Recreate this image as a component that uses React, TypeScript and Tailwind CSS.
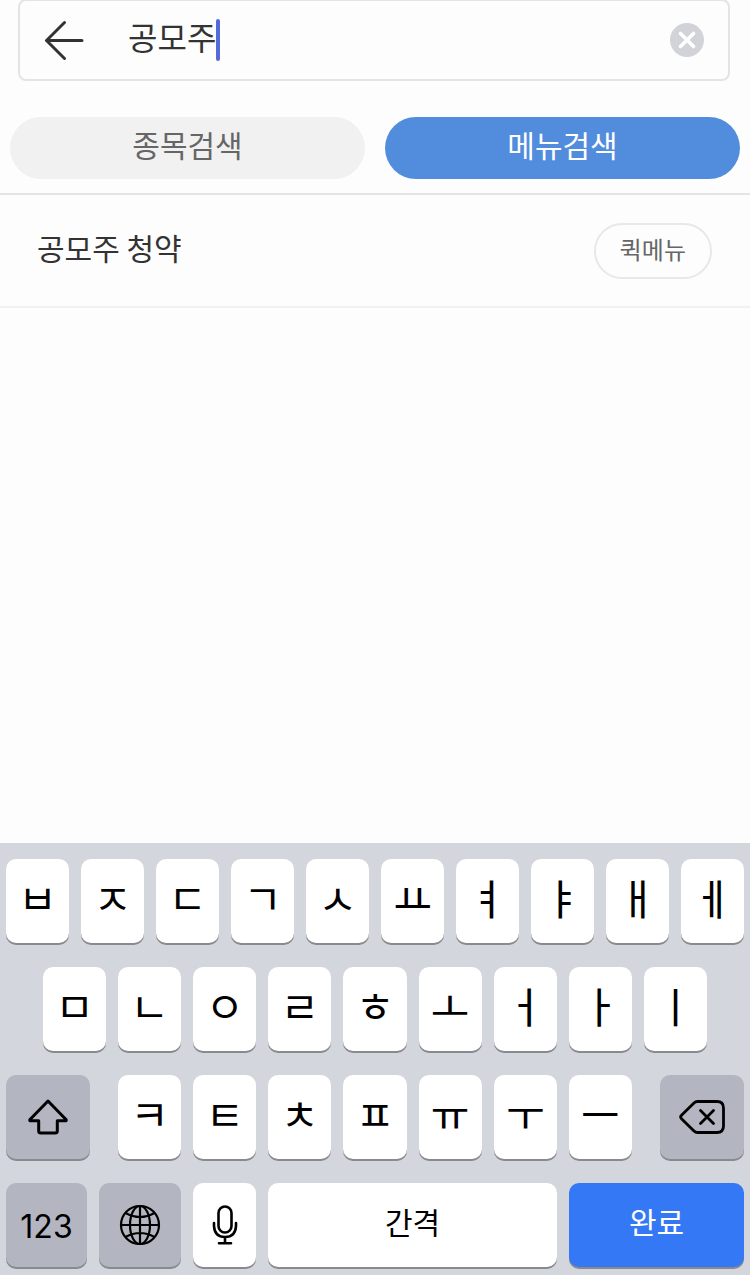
import type { ReactNode } from "react";
import clsx from "clsx";

interface KeyProps {
  label?: string;
  className?: string;
  children: ReactNode;
}

const topRow = ["ㅂ", "ㅈ", "ㄷ", "ㄱ", "ㅅ", "ㅛ", "ㅕ", "ㅑ", "ㅐ", "ㅔ"];
const middleRow = ["ㅁ", "ㄴ", "ㅇ", "ㄹ", "ㅎ", "ㅗ", "ㅓ", "ㅏ", "ㅣ"];
const bottomRow = ["ㅋ", "ㅌ", "ㅊ", "ㅍ", "ㅠ", "ㅜ", "ㅡ"];

const BackIcon = () => (
  <svg width="40" height="40" viewBox="0 0 40 40" fill="none" stroke="#333" strokeWidth="3" strokeLinecap="round" strokeLinejoin="round">
    <path d="M38 20.5H2.5M20.5 2.5L2.5 20.5L20.5 38.5" />
  </svg>
);

const ClearIcon = () => (
  <svg width="34" height="34" viewBox="0 0 34 34" fill="none">
    <circle cx="17" cy="17" r="17" fill="#d2d3d8" />
    <path d="M10.5 10.5L23.5 23.5M23.5 10.5L10.5 23.5" stroke="#fff" strokeWidth="3.6" strokeLinecap="round" />
  </svg>
);

const ShiftIcon = () => (
  <svg width="40" height="36" viewBox="0 0 40 36" fill="none" stroke="#000" strokeWidth="3" strokeLinejoin="round">
    <path d="M20 2L38 20.5Q38.8 21.8 37 21.8H29.3V32Q29.3 34 27.3 34H12.7Q10.7 34 10.7 32V21.8H3Q1.2 21.8 2 20.5Z" />
  </svg>
);

const DeleteIcon = () => (
  <svg width="46" height="34" viewBox="0 0 46 34" fill="none" stroke="#000" strokeWidth="2.8" strokeLinecap="round" strokeLinejoin="round">
    <path d="M18.5 1.5H38Q44.5 1.5 44.5 8V26Q44.5 32.5 38 32.5H18.5Q16.5 32.5 15 31L2.5 18.7Q0.8 17 2.5 15.3L15 3Q16.5 1.5 18.5 1.5Z" />
    <path d="M21.5 10.5L34.5 23.5M34.5 10.5L21.5 23.5" />
  </svg>
);

const GlobeIcon = () => (
  <svg width="42" height="42" viewBox="0 0 42 42" fill="none" stroke="#000" strokeWidth="2.2">
    <circle cx="21" cy="21" r="19" />
    <ellipse cx="21" cy="21" rx="10" ry="19" />
    <path d="M21 2V40M2 21H40M6.5 9Q21 17 35.5 9M6.5 33Q21 25 35.5 33" />
  </svg>
);

const MicIcon = () => (
  <svg width="26" height="40" viewBox="0 0 26 40" fill="none" stroke="#000" strokeWidth="2.6" strokeLinecap="round">
    <rect x="6.5" y="1.5" width="13" height="26" rx="6.5" />
    <path d="M2 18V21Q2.5 32 13 32Q23.5 32 24 21V18M13 32V38.3M7 38.3H19" />
  </svg>
);

const Key = ({ label, className = "bg-white flex-1 pb-2 text-[42px]", children }: KeyProps) => (
  <button
    type="button"
    aria-label={label}
    className={clsx(
      "flex h-[84px] min-w-0 items-center justify-center rounded-[10px] text-black shadow-[0_2px_0_#898a8d]",
      className
    )}
  >
    {children}
  </button>
);

const LetterKeys = ({ letters }: { letters: string[] }) => (
  <>
    {letters.map((letter) => (
      <Key key={letter}>
        <span className="leading-none">{letter}</span>
      </Key>
    ))}
  </>
);

const Keyboard = () => (
  <section aria-label="키보드" className="flex flex-col gap-6 bg-[#d3d6dc] px-1.5 pt-4 pb-2">
    <div className="flex gap-3">
      <LetterKeys letters={topRow} />
    </div>
    <div className="flex gap-3 px-[37px]">
      <LetterKeys letters={middleRow} />
    </div>
    <div className="flex gap-7">
      <Key label="Shift" className="flex-[84] bg-[#b3b6c0]">
        <ShiftIcon />
      </Key>
      <div className="flex flex-[514] gap-3">
        <LetterKeys letters={bottomRow} />
      </div>
      <Key label="삭제" className="flex-[84] bg-[#b3b6c0]">
        <DeleteIcon />
      </Key>
    </div>
    <div className="flex gap-3">
      <Key className="flex-[81] bg-[#b3b6c0] pt-1 font-[Inter,sans-serif] text-[32px]">123</Key>
      <Key label="언어 변경" className="flex-[82] bg-[#b3b6c0]">
        <GlobeIcon />
      </Key>
      <Key label="음성 입력" className="flex-[63] bg-white">
        <MicIcon />
      </Key>
      <Key className="flex-[289] bg-white pb-2 text-[30px]">간격</Key>
      <Key className="flex-[175] bg-[#3478f6] pb-2 text-[30px] text-white">완료</Key>
    </div>
  </section>
);

const SearchBar = () => (
  <form className="-mt-px mr-5 ml-[18px] flex h-[82px] items-center rounded-lg border-2 border-[#e4e4e4] px-6">
    <button type="button" aria-label="뒤로">
      <BackIcon />
    </button>
    <label className="ml-11 flex flex-1 items-center">
      <input
        type="text"
        aria-label="검색어"
        defaultValue="공모주"
        className="[field-sizing:content] h-12 pb-2 text-[32px] text-[#333] outline-none"
      />
      <span className="h-[42px] w-1 rounded-full bg-[#536bd8]" />
    </label>
    <button type="reset" aria-label="지우기">
      <ClearIcon />
    </button>
  </form>
);

const App = () => {
  return (
    <div className="flex min-h-screen flex-col bg-[#fdfdfd] font-['Noto_Sans_CJK_KR',sans-serif]">
      <header className="border-b-2 border-[#e4e4e4] pb-3.5">
        <SearchBar />
        <nav className="mt-9 grid grid-cols-2 gap-5 px-2.5">
          <button type="button" className="h-[62px] rounded-full bg-[#f1f1f1] pb-2 text-[30px] leading-10 text-[#666]">
            종목검색
          </button>
          <button type="button" className="h-[62px] rounded-full bg-[#518ddc] pb-2 text-[30px] leading-10 text-white">
            메뉴검색
          </button>
        </nav>
      </header>
      <main className="flex-1">
        <ul>
          <li className="flex items-center justify-between border-b-2 border-[#f1f1f1] pt-7 pr-[38px] pb-[27px] pl-[37px]">
            <a href="#subscription" className="pb-2 text-[30px] leading-10 text-[#333]">
              공모주 청약
            </a>
            <button type="button" className="h-14 rounded-full border-2 border-[#e8e8e8] px-6 pb-1 text-2xl text-[#666]">
              퀵메뉴
            </button>
          </li>
        </ul>
      </main>
      <Keyboard />
    </div>
  );
};

export default App;
